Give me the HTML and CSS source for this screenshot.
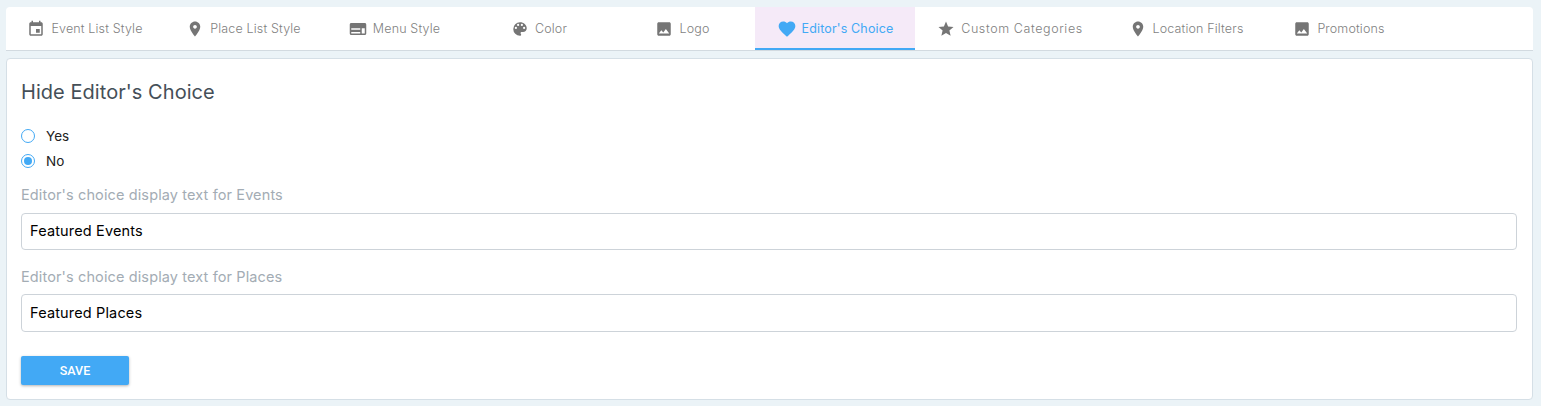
FILE: index.html
```html
<!DOCTYPE html>
<html lang="en">
<head>
<meta charset="utf-8">
<title>Settings</title>
<link rel="stylesheet" href="styles.css">
</head>
<body>
<nav class="tabs">
  <a class="tab"><svg class="icon" viewBox="0 0 24 24"><path d="M17 12h-5v5h5v-5zM16 1v2H8V1H6v2H5c-1.11 0-1.99.9-1.99 2L3 19c0 1.1.89 2 2 2h14c1.1 0 2-.9 2-2V5c0-1.1-.9-2-2-2h-1V1h-2zm3 18H5V8h14v11z"/></svg><span>Event List Style</span></a>
  <a class="tab"><svg class="icon" viewBox="0 0 24 24"><path d="M12 2C8.13 2 5 5.13 5 9c0 5.25 7 13 7 13s7-7.75 7-13c0-3.87-3.13-7-7-7zm0 9.5c-1.38 0-2.5-1.12-2.5-2.5s1.12-2.5 2.5-2.5 2.5 1.12 2.5 2.5-1.12 2.5-2.5 2.5z"/></svg><span>Place List Style</span></a>
  <a class="tab"><svg class="icon" viewBox="0 0 24 24"><path fill-rule="evenodd" d="M21 4H3c-1.1 0-2 .9-2 2v12c0 1.1.9 2 2 2h18c1.1 0 2-.9 2-2V6c0-1.100-.9-2-2-2zM3 11h12v2H3zm0 5h12v2H3zm14-5h4v7h-4z"/></svg><span>Menu Style</span></a>
  <a class="tab"><svg class="icon" viewBox="0 0 24 24"><path d="M12 3a9 9 0 0 0 0 18c.83 0 1.5-.67 1.5-1.5 0-.39-.15-.74-.39-1.01-.23-.26-.38-.61-.38-.99 0-.83.67-1.5 1.5-1.5H16c2.76 0 5-2.24 5-5 0-4.42-4.03-8-9-8zm-5.5 9a1.5 1.5 0 1 1 0-3 1.5 1.5 0 0 1 0 3zm3-4a1.5 1.5 0 1 1 0-3 1.5 1.5 0 0 1 0 3zm5 0a1.5 1.5 0 1 1 0-3 1.5 1.5 0 0 1 0 3zm3 4a1.5 1.5 0 1 1 0-3 1.5 1.5 0 0 1 0 3z"/></svg><span>Color</span></a>
  <a class="tab"><svg class="icon" viewBox="0 0 24 24"><path d="M21 19V5c0-1.1-.9-2-2-2H5c-1.1 0-2 .9-2 2v14c0 1.1.9 2 2 2h14c1.1 0 2-.9 2-2zM8.500 13.500l2.500 3.010L14.500 12l4.500 6H5l3.500-4.500z"/></svg><span>Logo</span></a>
  <a class="tab active"><svg class="icon" viewBox="0 0 24 24"><path d="M12 21.350l-1.450-1.320C5.400 15.360 2 12.280 2 8.500 2 5.420 4.420 3 7.500 3c1.740 0 3.410.810 4.500 2.090C13.090 3.810 14.760 3 16.500 3 19.580 3 22 5.420 22 8.500c0 3.780-3.400 6.860-8.550 11.540L12 21.350z"/></svg><span>Editor's Choice</span></a>
  <a class="tab wide"><svg class="icon" viewBox="0 0 24 24"><path d="M12 17.270L18.180 21l-1.640-7.030L22 9.240l-7.190-.610L12 2 9.190 8.630 2 9.240l5.460 4.730L5.820 21z"/></svg><span>Custom Categories</span></a>
  <a class="tab"><svg class="icon" viewBox="0 0 24 24"><path d="M12 2C8.13 2 5 5.13 5 9c0 5.25 7 13 7 13s7-7.75 7-13c0-3.87-3.13-7-7-7zm0 9.5c-1.38 0-2.5-1.12-2.5-2.5s1.12-2.5 2.5-2.5 2.5 1.12 2.5 2.5-1.12 2.5-2.5 2.500z"/></svg><span>Location Filters</span></a>
  <a class="tab"><svg class="icon" viewBox="0 0 24 24"><path d="M21 19V5c0-1.1-.9-2-2-2H5c-1.1 0-2 .9-2 2v14c0 1.1.9 2 2 2h14c1.1 0 2-.9 2-2zM8.500 13.500l2.500 3.010L14.500 12l4.500 6H5l3.500-4.500z"/></svg><span>Promotions</span></a>
</nav>
<main class="card">
  <h2 class="title">Hide Editor's Choice</h2>
  <div class="radios">
    <label class="radio"><span class="dot"></span><span>Yes</span></label>
    <label class="radio"><span class="dot checked"></span><span>No</span></label>
  </div>
  <div class="field first">
    <div class="label">Editor's choice display text for Events</div>
    <div class="input">Featured Events</div>
  </div>
  <div class="field">
    <div class="label">Editor's choice display text for Places</div>
    <div class="input tall">Featured Places</div>
  </div>
  <button class="save">SAVE</button>
</main>
</body>
</html>
```
FILE: styles.css
```css
* { box-sizing: border-box; }
html, body { height: 100%; }
body {
  margin: 0;
  padding: 7px 8px 6px 6px;
  background: #ebf3f7;
  font-family: "Inter", "Liberation Sans", sans-serif;
  color: #000;
  overflow: hidden;
}
.tabs {
  display: grid;
  grid-template-columns: 160px 157px 145px 144px 143px 160px 192px 160px 146px 1fr;
  height: 44px;
  background: #fff;
  border-radius: 4px 4px 0 0;
  border-bottom: 1px solid #d2dae0;
}
.tab {
  display: flex;
  align-items: center;
  justify-content: center;
  gap: 6px;
  height: 43px;
  padding-right: 2px;
  font-size: 12.5px;
  font-weight: 300;
  color: #7f7f7f;
  letter-spacing: 0.15px;
}
.wide { letter-spacing: 0.6px; }
.icon { width: 18px; height: 18px; fill: #757575; flex: none; }
.tab.active {
  gap: 5px;
  padding-right: 0;
  background: #f5eaf8;
  color: #42a9f5;
  box-shadow: inset 0 -2px 0 #42a9f5;
  font-weight: 400;
}
.tab.active .icon { fill: #42a9f5; width: 20px; height: 20px; }
.card {
  margin-top: 7px;
  height: 342px;
  background: #fff;
  border: 1px solid #d5dfe6;
  border-radius: 4px;
  padding: 20px 15px 0 14px;
}
.title {
  margin: 0;
  font-size: 20px;
  line-height: 26px;
  font-weight: 400;
  color: #454f58;
  letter-spacing: 0.05px;
}
.radios { margin-top: 21px; display: flex; flex-direction: column; gap: 5px; }
.radio { display: flex; align-items: center; gap: 11px; height: 20px; font-size: 13.5px; color: #222; }
.dot {
  width: 14px; height: 14px;
  border: 1px solid #42a9f5;
  border-radius: 50%;
  display: flex;
  align-items: center;
  justify-content: center;
}
.dot.checked::before {
  content: "";
  width: 8px; height: 8px;
  border-radius: 50%;
  background: #42a9f5;
}
.field.first { margin-top: 14px; }
.field { margin-top: 17px; }
.label { font-size: 14.5px; line-height: 20px; color: #a3acb4; letter-spacing: 0.12px; }
.input {
  margin-top: 8px;
  height: 37px;
  border: 1px solid #cdd3d9;
  border-radius: 4px;
  padding: 0 8px 2px;
  display: flex;
  align-items: center;
  font-size: 14.5px;
  letter-spacing: 0.15px;
  color: #000;
}
.input.tall { height: 38px; margin-top: 7px; }
.save {
  display: block;
  margin-top: 24px;
  width: 108px;
  height: 29px;
  border: 0;
  border-radius: 2px;
  background: #42a9f5;
  color: #fff;
  font-family: "Roboto", sans-serif;
  font-weight: 500;
  font-size: 12.5px;
  box-shadow: 0 1px 3px rgba(0,0,0,.3);
}
```
